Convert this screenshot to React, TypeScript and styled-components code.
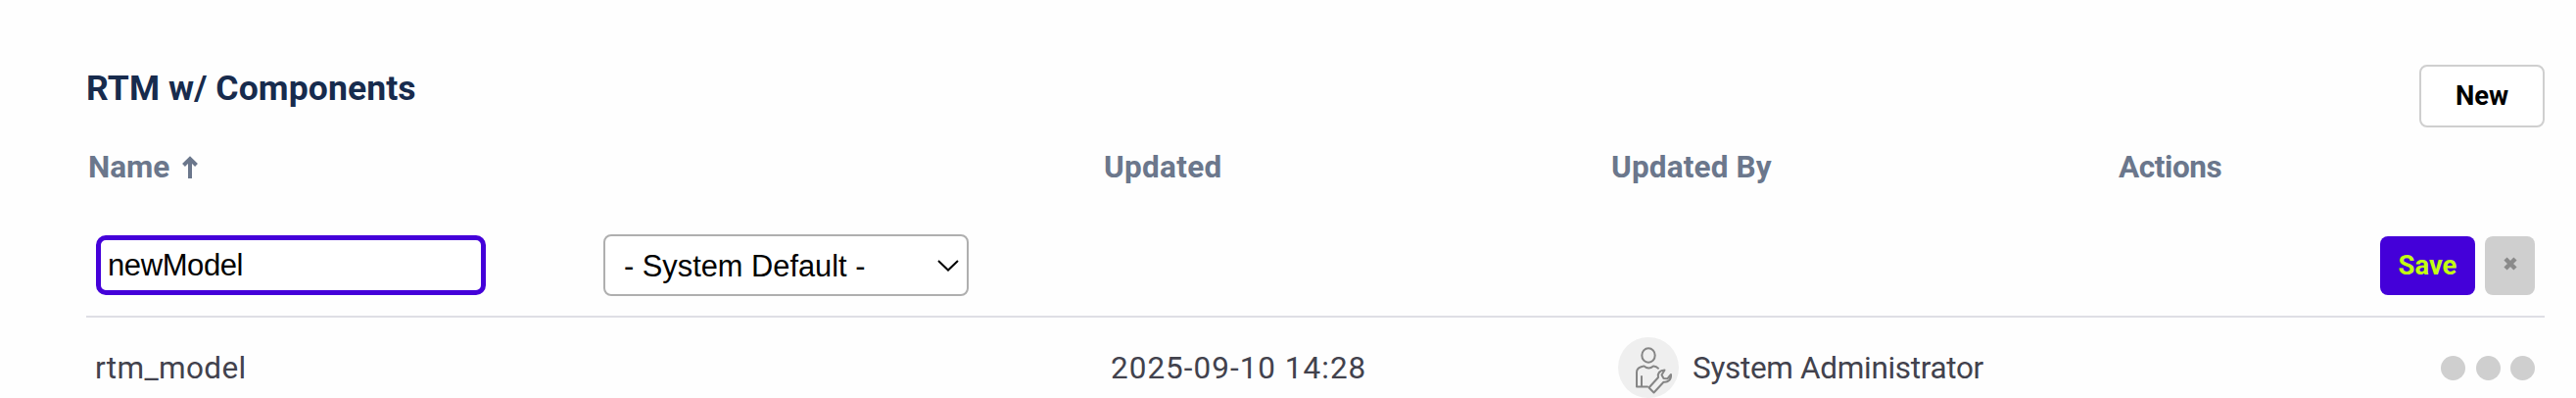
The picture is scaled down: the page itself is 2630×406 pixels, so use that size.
import * as React from "react";
import styled, { createGlobalStyle } from "styled-components";

const GlobalStyle = createGlobalStyle`
  * {
    box-sizing: border-box;
  }
  body {
    margin: 0;
    background-color: #fefefe;
    font-family: Roboto, "Liberation Sans", sans-serif;
    overflow: hidden;
  }
`;

interface TextProps {
  $spacing?: number;
}

interface CellProps {
  $pad?: number;
}

const Page = styled.main`
  height: 406px;
  padding: 66px 32px 0 88px;
  overflow: hidden;
`;

const Toolbar = styled.header`
  display: flex;
  justify-content: space-between;
  align-items: flex-start;
`;

const Title = styled.h1`
  margin: 0;
  color: #172b4d;
  font-size: 35.5px;
  font-weight: 700;
  line-height: 48px;
  letter-spacing: 0.1px;
`;

const Button = styled.button`
  height: 60px;
  padding: 0;
  border: 0;
  border-radius: 8px;
  font-family: Roboto, "Liberation Sans", sans-serif;
  font-size: 27.4px;
  font-weight: 700;
`;

const NewButton = styled(Button)`
  width: 128px;
  height: 64px;
  border: 2px solid #cfcfcf;
  background-color: #fff;
  color: #000;
`;

const SaveButton = styled(Button)`
  width: 97px;
  background-color: #4400d9;
  color: #c3ff12;
`;

const CancelButton = styled(Button)`
  display: flex;
  align-items: center;
  justify-content: center;
  width: 51px;
  padding-bottom: 3px;
  background-color: #cfcfcf;
  color: #8a8a8a;
`;

const Row = styled.div`
  display: grid;
  grid-template-columns: repeat(4, 518px) 1fr;
  align-items: center;
`;

const HeadRow = styled(Row)`
  height: 80px;
  padding-top: 2px;
  grid-template-columns: 1036px 518px 518px 1fr;
  color: #6b778c;
  font-size: 31.5px;
  font-weight: 700;
`;

const EditRow = styled(Row)`
  height: 114px;
  padding: 29px 0 20px;
  border-bottom: 2px solid #dfdfe5;
`;

const DataRow = styled(Row)`
  padding: 20px 0;
  color: #42424d;
  font-size: 31.5px;
`;

const Cell = styled.div<CellProps>`
  display: flex;
  align-items: center;
  padding-left: ${(props) => props.$pad ?? 10}px;
`;

const ActionCell = styled(Cell)`
  grid-column: 5;
  justify-content: flex-end;
  gap: 10px;
  padding-right: 10px;
`;

const DotsCell = styled(ActionCell)`
  gap: 10.5px;
`;

const Label = styled.span<TextProps>`
  line-height: 40px;
  letter-spacing: ${(props) => props.$spacing ?? 0}px;
  white-space: nowrap;
`;

const DataLabel = styled(Label)`
  padding-top: 2px;
`;

const NameInput = styled.input`
  width: 398px;
  height: 61px;
  padding: 0 7px;
  border: 5px solid #4400d9;
  border-radius: 10px;
  outline: 0;
  background-color: #fff;
  color: #000;
  font: 31px "Liberation Sans", sans-serif;
  letter-spacing: -0.4px;
`;

const SelectBox = styled.div`
  display: grid;
  align-items: center;
  width: 373px;
  height: 63px;

  > * {
    grid-area: 1 / 1;
  }

  > svg {
    justify-self: end;
    margin-right: 10px;
    pointer-events: none;
  }
`;

const Select = styled.select`
  appearance: none;
  width: 100%;
  height: 100%;
  padding: 2px 20px 0 19px;
  border: 2px solid #afafaf;
  border-radius: 8px;
  background-color: #fff;
  color: #000;
  font: 30.8px "Liberation Sans", sans-serif;
`;

const SortIcon = styled.svg`
  margin-left: 13px;
`;

const Avatar = styled.div`
  width: 62px;
  height: 62px;
  margin-right: 14px;
  border-radius: 50%;
  background-color: #efefef;
`;

const Dot = styled.span`
  width: 25px;
  height: 25px;
  border-radius: 50%;
  background-color: #cfcfcf;
`;

function AdminAvatar() {
  return (
    <Avatar>
      <svg
        width="62"
        height="62"
        viewBox="0 0 62 62"
        fill="none"
        stroke="#858585"
        strokeWidth="2"
        strokeLinejoin="round"
        strokeLinecap="round"
      >
        <ellipse cx="31" cy="18.5" rx="6.7" ry="7.2" />
        <path d="M24 40v10.500M30 50.500H19V36c0-3 1.500-5 4.500-5.800l3-.8c3 2.600 6.500 2.600 9.500 0l3 .8 2 1.500" />
        <path d="M31.500 51.500 41 41c-1-4 1.500-7.500 6.500-7.500l-3 5 2 3.500 4 .2 3.500-4.200c.5 5-3 8.500-7.500 7.700L36.500 56.500Z" />
      </svg>
    </Avatar>
  );
}

function App(): React.ReactElement {
  const [name, setName] = React.useState("newModel");

  return (
    <Page>
      <GlobalStyle />
      <Toolbar>
        <Title>RTM w/ Components</Title>
        <NewButton>New</NewButton>
      </Toolbar>
      <HeadRow>
        <Cell $pad={2}>
          <Label>Name</Label>
          <SortIcon
            width="16"
            height="24"
            viewBox="0 0 16 24"
            fill="none"
            stroke="currentColor"
            strokeWidth="4"
          >
            <path d="M8 23V3M1.500 9.500 8 3l6.500 6.500" />
          </SortIcon>
        </Cell>
        <Cell $pad={3}>
          <Label $spacing={0.3}>Updated</Label>
        </Cell>
        <Cell $pad={3}>
          <Label $spacing={0.15}>Updated By</Label>
        </Cell>
        <Cell $pad={3}>
          <Label $spacing={-0.4}>Actions</Label>
        </Cell>
      </HeadRow>
      <EditRow>
        <Cell>
          <NameInput value={name} onChange={(e) => setName(e.target.value)} />
        </Cell>
        <Cell>
          <SelectBox>
            <Select defaultValue="default">
              <option value="default">- System Default -</option>
            </Select>
            <svg
              width="22"
              height="12"
              viewBox="0 0 22 12"
              fill="none"
              stroke="#000"
              strokeWidth="2"
            >
              <path d="M1 1l10 9.500L21 1" />
            </svg>
          </SelectBox>
        </Cell>
        <ActionCell>
          <SaveButton>Save</SaveButton>
          <CancelButton aria-label="Cancel">
            <svg
              width="14"
              height="14"
              viewBox="0 0 14 14"
              stroke="currentColor"
              strokeWidth="4.500"
            >
              <path d="M2 2l10 10M12 2 2 12" />
            </svg>
          </CancelButton>
        </ActionCell>
      </EditRow>
      <DataRow>
        <Cell $pad={9}>
          <DataLabel $spacing={0.35}>rtm_model</DataLabel>
        </Cell>
        <Cell />
        <Cell>
          <DataLabel $spacing={1}>2025-09-10 14:28</DataLabel>
        </Cell>
        <Cell>
          <AdminAvatar />
          <DataLabel $spacing={-0.32}>System Administrator</DataLabel>
        </Cell>
        <DotsCell>
          <Dot />
          <Dot />
          <Dot />
        </DotsCell>
      </DataRow>
    </Page>
  );
}

export default App;
